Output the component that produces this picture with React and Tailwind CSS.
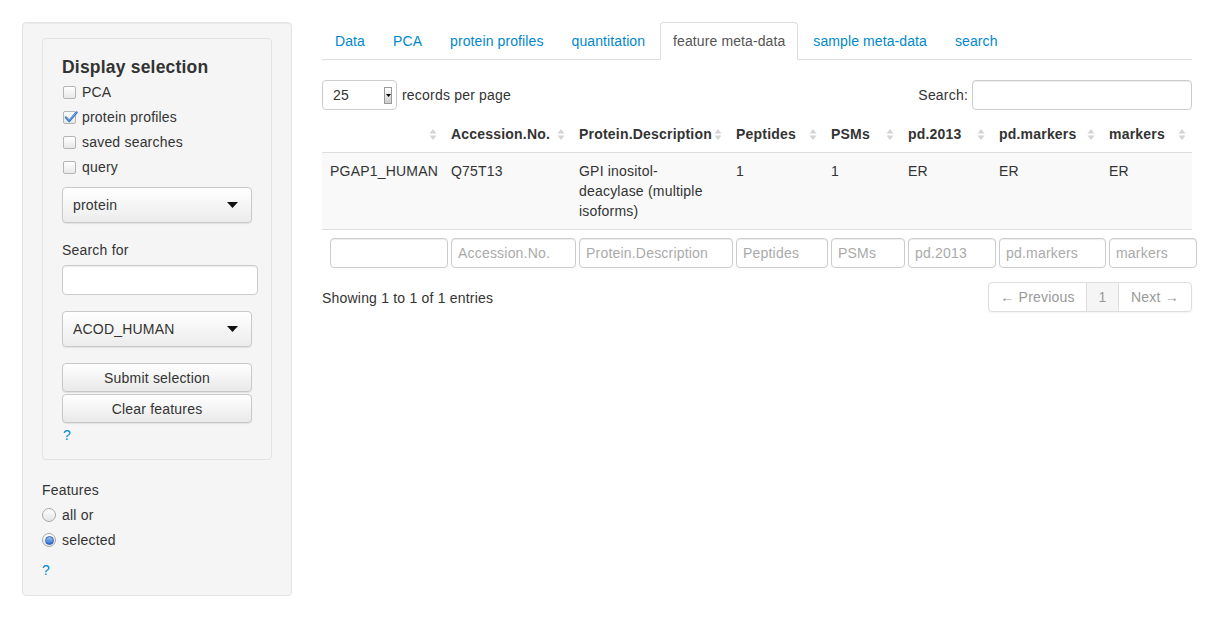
import React from "react";

const font = "font-['Liberation_Sans',Arial,sans-serif]";

function Checkbox({ checked }) {
  return (
    <span className="relative inline-block w-[13px] h-[13px] rounded-[2px] border border-[#b5b5b5] bg-gradient-to-b from-white to-[#e8e8e8] shrink-0">
      {checked && (
        <svg className="absolute left-[0px] top-[-2px]" width="14" height="14" viewBox="0 0 14 14">
          <path d="M2 7.5 L5.2 11 L12.5 2.5" fill="none" stroke="#3a78c4" strokeWidth="2.4" strokeLinecap="round" strokeLinejoin="round" />
          <path d="M2.4 7.5 L5.2 10.3 L12 2.8" fill="none" stroke="#8cb8ea" strokeWidth="0.8" strokeLinecap="round" />
        </svg>
      )}
    </span>
  );
}

function Radio({ checked }) {
  return (
    <span className="relative inline-flex items-center justify-center w-[14px] h-[14px] rounded-full border border-[#a8a8a8] bg-gradient-to-b from-white to-[#e4e4e4] shrink-0">
      {checked && (
        <span className="w-[9px] h-[9px] rounded-full bg-gradient-to-b from-[#9cc4f0] to-[#2f6fd0] border border-[#2a5fae]" />
      )}
    </span>
  );
}

function Select({ label }) {
  return (
    <div className="flex items-center justify-between w-[190px] h-[36px] rounded-[4px] border border-[#c9c9c9] bg-gradient-to-b from-white to-[#ececec] shadow-[0_1px_1px_rgba(0,0,0,0.08)] pl-[10px] pr-[13px] text-[14px] text-[#333]">
      <span>{label}</span>
      <svg width="11" height="6" viewBox="0 0 11 6">
        <path d="M0 0 H11 L5.5 6 Z" fill="#111" />
      </svg>
    </div>
  );
}

function Button({ children }) {
  return (
    <div className="flex items-center justify-center w-[190px] h-[29px] rounded-[4px] border border-[#c8c8c8] bg-gradient-to-b from-white to-[#e9e9e9] shadow-[0_1px_1px_rgba(0,0,0,0.08)] text-[14px] text-[#333]">
      {children}
    </div>
  );
}

function SortIcon() {
  return (
    <svg width="8" height="13" viewBox="0 0 8 13" className="shrink-0">
      <path d="M0.5 5.5 L4 1 L7.5 5.5 Z" fill="#d4d4d4" />
      <path d="M0.5 7.5 L4 12 L7.5 7.5 Z" fill="#d4d4d4" />
    </svg>
  );
}

const cols = [
  { w: 121, h: "", f: "" },
  { w: 128, h: "Accession.No.", f: "Accession.No." },
  { w: 157, h: "Protein.Description", f: "Protein.Description" },
  { w: 95, h: "Peptides", f: "Peptides" },
  { w: 77, h: "PSMs", f: "PSMs" },
  { w: 91, h: "pd.2013", f: "pd.2013" },
  { w: 110, h: "pd.markers", f: "pd.markers" },
  { w: 91, h: "markers", f: "markers" },
];

const row = [
  "PGAP1_HUMAN",
  "Q75T13",
  <>GPI inositol-<br />deacylase (multiple<br />isoforms)</>,
  "1",
  "1",
  "ER",
  "ER",
  "ER",
];

const tabs = ["Data", "PCA", "protein profiles", "quantitation", "feature meta-data", "sample meta-data", "search"];

export default function App() {
  return (
    <div className={`${font} text-[14px] leading-[20px] text-[#333] bg-white w-[1215px] h-[619px] flex items-start pt-[22px] pl-[22px] tracking-[0.2px]`}>
      {/* Sidebar */}
      <div className="w-[270px] h-[574px] shrink-0 rounded-[4px] border border-[#e3e3e3] bg-[#f5f5f5] pt-[15px] px-[19px] shadow-[inset_0_1px_1px_rgba(0,0,0,0.05)]">
        <div className="w-[230px] h-[422px] rounded-[4px] border border-[#e3e3e3] bg-[#f5f5f5] pt-[18px] px-[19px]">
          <h4 className="text-[17.5px] leading-[20px] font-bold text-[#333]">Display selection</h4>
          <div className="mt-[5px] flex flex-col gap-[5px]">
            {[
              ["PCA", false],
              ["protein profiles", true],
              ["saved searches", false],
              ["query", false],
            ].map(([l, c]) => (
              <div key={l} className="h-[20px] flex items-center gap-[6px] pl-[1px]">
                <Checkbox checked={c} />
                <span>{l}</span>
              </div>
            ))}
          </div>
          <div className="mt-[10px]">
            <Select label="protein" />
          </div>
          <div className="mt-[17px]">Search for</div>
          <div className="mt-[5px] w-[196px] h-[30px] rounded-[4px] border border-[#ccc] bg-white shadow-[inset_0_1px_1px_rgba(0,0,0,0.075)]" />
          <div className="mt-[16px]">
            <Select label="ACOD_HUMAN" />
          </div>
          <div className="mt-[16px]">
            <Button>Submit selection</Button>
          </div>
          <div className="mt-[2px]">
            <Button>Clear features</Button>
          </div>
          <div className="mt-[2px] pl-[1px] text-[#0088cc]">?</div>
        </div>
        <div className="mt-[20px]">Features</div>
        <div className="mt-[5px] flex flex-col gap-[5px]">
          <div className="h-[20px] flex items-center gap-[6px]">
            <Radio />
            <span>all or</span>
          </div>
          <div className="h-[20px] flex items-center gap-[6px]">
            <Radio checked />
            <span>selected</span>
          </div>
        </div>
        <div className="mt-[10px] text-[#0088cc]">?</div>
      </div>

      {/* Main */}
      <div className="ml-[30px] w-[870px] shrink-0">
        <div className="flex border-b border-[#ddd] tracking-[0.1px]">
          {tabs.map((t) => {
            const active = t === "feature meta-data";
            return (
              <div
                key={t}
                className={
                  active
                    ? "-mb-px mr-[2px] px-[12px] py-[8px] border border-[#ddd] border-b-white rounded-t-[4px] bg-white text-[#555]"
                    : "-mb-px mr-[2px] px-[12px] py-[8px] border border-transparent text-[#0088cc]"
                }
              >
                {t}
              </div>
            );
          })}
        </div>

        <div className="mt-[20px] flex items-center justify-between h-[30px]">
          <div className="flex items-center">
            <div className="relative w-[75px] h-[30px] rounded-[4px] border border-[#ccc] bg-white flex items-center pl-[10px]">
              <span>25</span>
              <div className="absolute left-[61px] top-[6px] w-[8px] h-[17px] border border-[#999] bg-gradient-to-b from-white to-[#ccc] flex items-center justify-center">
                <svg width="5" height="3" viewBox="0 0 5 3">
                  <path d="M0 0 H5 L2.5 3 Z" fill="#000" />
                </svg>
              </div>
            </div>
            <span className="ml-[5px]">records per page</span>
          </div>
          <div className="flex items-center">
            <span className="mr-[4px]">Search:</span>
            <div className="w-[220px] h-[30px] rounded-[4px] border border-[#ccc] bg-white shadow-[inset_0_1px_1px_rgba(0,0,0,0.075)]" />
          </div>
        </div>

        <table className="mt-[6px] table-fixed border-collapse w-[870px]">
          <colgroup>
            {cols.map((c, i) => (
              <col key={i} style={{ width: c.w }} />
            ))}
          </colgroup>
          <thead>
            <tr className="border-b border-[#ddd]">
              {cols.map((c, i) => (
                <th key={i} className="py-[8px] pl-[8px] pr-[6px] text-left font-bold">
                  <div className="flex items-center justify-between">
                    <span className="whitespace-nowrap">{c.h}</span>
                    <SortIcon />
                  </div>
                </th>
              ))}
            </tr>
          </thead>
          <tbody>
            <tr className="bg-[#f9f9f9] border-b border-[#ddd]">
              {row.map((v, i) => (
                <td key={i} className="p-[8px] align-top whitespace-nowrap">
                  {v}
                </td>
              ))}
            </tr>
          </tbody>
          <tfoot>
            <tr>
              {cols.map((c, i) => (
                <td key={i} className="pt-[8px] pb-[8px] pl-[8px] pr-0 overflow-visible">
                  <div
                    className="h-[30px] rounded-[4px] border border-[#ccc] bg-white flex items-center pl-[6px] text-[#aaa] whitespace-nowrap shadow-[inset_0_1px_1px_rgba(0,0,0,0.075)]"
                    style={{ width: c.w - 3 }}
                  >
                    {c.f}
                  </div>
                </td>
              ))}
            </tr>
          </tfoot>
        </table>

        <div className="mt-[6px] flex items-center justify-between">
          <span className="mt-[2px]">Showing 1 to 1 of 1 entries</span>
          <div className="flex h-[30px] rounded-[4px] border border-[#ddd] shadow-[0_1px_2px_rgba(0,0,0,0.05)] text-[#999]">
            <div className="w-[98px] flex items-center justify-center border-r border-[#ddd]">← Previous</div>
            <div className="w-[32px] flex items-center justify-center border-r border-[#ddd] bg-[#f5f5f5]">1</div>
            <div className="w-[72px] flex items-center justify-center">Next →</div>
          </div>
        </div>
      </div>
    </div>
  );
}
